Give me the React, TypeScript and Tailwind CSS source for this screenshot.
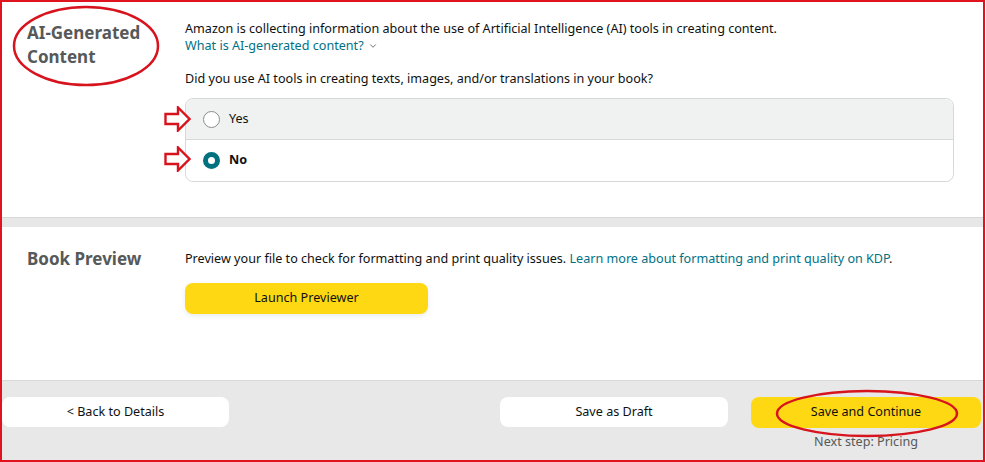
import { ChevronDown } from "lucide-react";

function OutlineArrow({ className }: { className?: string }) {
  return (
    <svg width="27" height="26" viewBox="0 0 27 26" className={className}>
      <polygon
        points="1.5,8 14,8 14,1.5 25.5,13 14,24.5 14,18 1.5,18"
        fill="white"
        stroke="#d7141d"
        strokeWidth="2.4"
        strokeLinejoin="miter"
      />
    </svg>
  );
}

function Ellipse({ w, h }: { w: number; h: number }) {
  return (
    <svg width={w} height={h} viewBox={`0 0 ${w} ${h}`}>
      <ellipse cx={w / 2} cy={h / 2} rx={w / 2 - 2} ry={h / 2 - 2} fill="none" stroke="#d7141d" strokeWidth="2.5" />
    </svg>
  );
}

export default function App() {
  return (
    <div
      className="w-[986px] h-[462px] bg-white overflow-hidden text-[#0f1111]"
      style={{ fontFamily: '"Noto Sans", "Open Sans", sans-serif' }}
    >
      <div className="relative w-[985px] h-[462px] border-2 border-[#e0141e] flex flex-col">
        {/* AI-generated content */}
        <section className="relative flex bg-white h-[216px] border-b border-[#d5d9d9] pr-[29px]">
          <div className="w-[183px] pl-[25px] pt-[19px]">
            <h2 className="text-[17px] leading-[24px] font-bold text-[#565959]">
              AI-Generated
              <br />
              Content
            </h2>
          </div>
          <div className="flex-1 pt-[18px]">
            <p className="text-[12.6px] leading-[17px]">
              Amazon is collecting information about the use of Artificial Intelligence (AI) tools in creating content.
            </p>
            <a className="flex items-center gap-1 text-[12.6px] leading-[17px] text-[#007185]">
              What is AI-generated content?
              <ChevronDown size={10} className="text-[#565959]" />
            </a>
            <p className="mt-[16px] text-[12.6px] leading-[18px]">
              Did you use AI tools in creating texts, images, and/or translations in your book?
            </p>
            <div className="relative mt-[10px] rounded-lg border border-[#d5d9d9] overflow-visible">
              <div className="relative flex items-center gap-[9px] h-[41px] pl-[17px] bg-[#f0f2f2] rounded-t-lg border-b border-[#d5d9d9]">
                <OutlineArrow className="absolute -left-[22px] top-[7px]" />
                <span className="w-[17px] h-[17px] rounded-full border border-[#888c8c] bg-white" />
                <span className="text-[12.6px]">Yes</span>
              </div>
              <div className="relative flex items-center gap-[9px] h-[41px] pl-[17px] bg-white rounded-b-lg">
                <OutlineArrow className="absolute -left-[22px] top-[6px]" />
                <span className="w-[17px] h-[17px] rounded-full border-[5px] border-[#00717f] bg-white" />
                <span className="text-[12.6px] font-bold">No</span>
              </div>
            </div>
          </div>
          <div className="absolute left-[10px] top-[3px]">
            <Ellipse w={148} h={82} />
          </div>
        </section>

        <div className="h-[9px] bg-[#e7e7e7]" />

        {/* Book preview */}
        <section className="flex flex-1 bg-white pt-[20px] pr-[29px] border-b border-[#d5d9d9]">
          <div className="w-[183px] pl-[25px]">
            <h2 className="text-[17px] leading-[24px] font-bold text-[#565959]">Book Preview</h2>
          </div>
          <div className="flex-1 pt-[3px]">
            <p className="text-[12.6px] leading-[18px]">
              Preview your file to check for formatting and print quality issues.{" "}
              <a className="text-[#007185]">Learn more about formatting and print quality on KDP</a>.
            </p>
            <button className="mt-[15px] w-[243px] h-[31px] rounded-lg bg-[#ffd814] text-[12.6px] shadow-[0_2px_5px_rgba(213,217,217,0.5)]">
              Launch Previewer
            </button>
          </div>
        </section>

        {/* Footer */}
        <footer className="relative h-[79px] bg-[#e8e8e8] flex items-start justify-between pt-[16px] pr-[2px]">
          <button className="w-[227px] h-[30px] rounded-lg bg-white text-[12.6px]">&lt; Back to Details</button>
          <div className="flex gap-[23px]">
            <button className="w-[228px] h-[30px] rounded-lg bg-white text-[12.6px]">Save as Draft</button>
            <div className="relative flex flex-col items-center">
              <button className="w-[230px] h-[31px] rounded-lg bg-[#ffd814] text-[12.6px]">Save and Continue</button>
              <span className="mt-[5px] text-[12.6px] leading-[18px] text-[#565959]">Next step: Pricing</span>
              <div className="absolute left-[24px] -top-[8px]">
                <Ellipse w={184} h={49} />
              </div>
            </div>
          </div>
        </footer>
      </div>
    </div>
  );
}
